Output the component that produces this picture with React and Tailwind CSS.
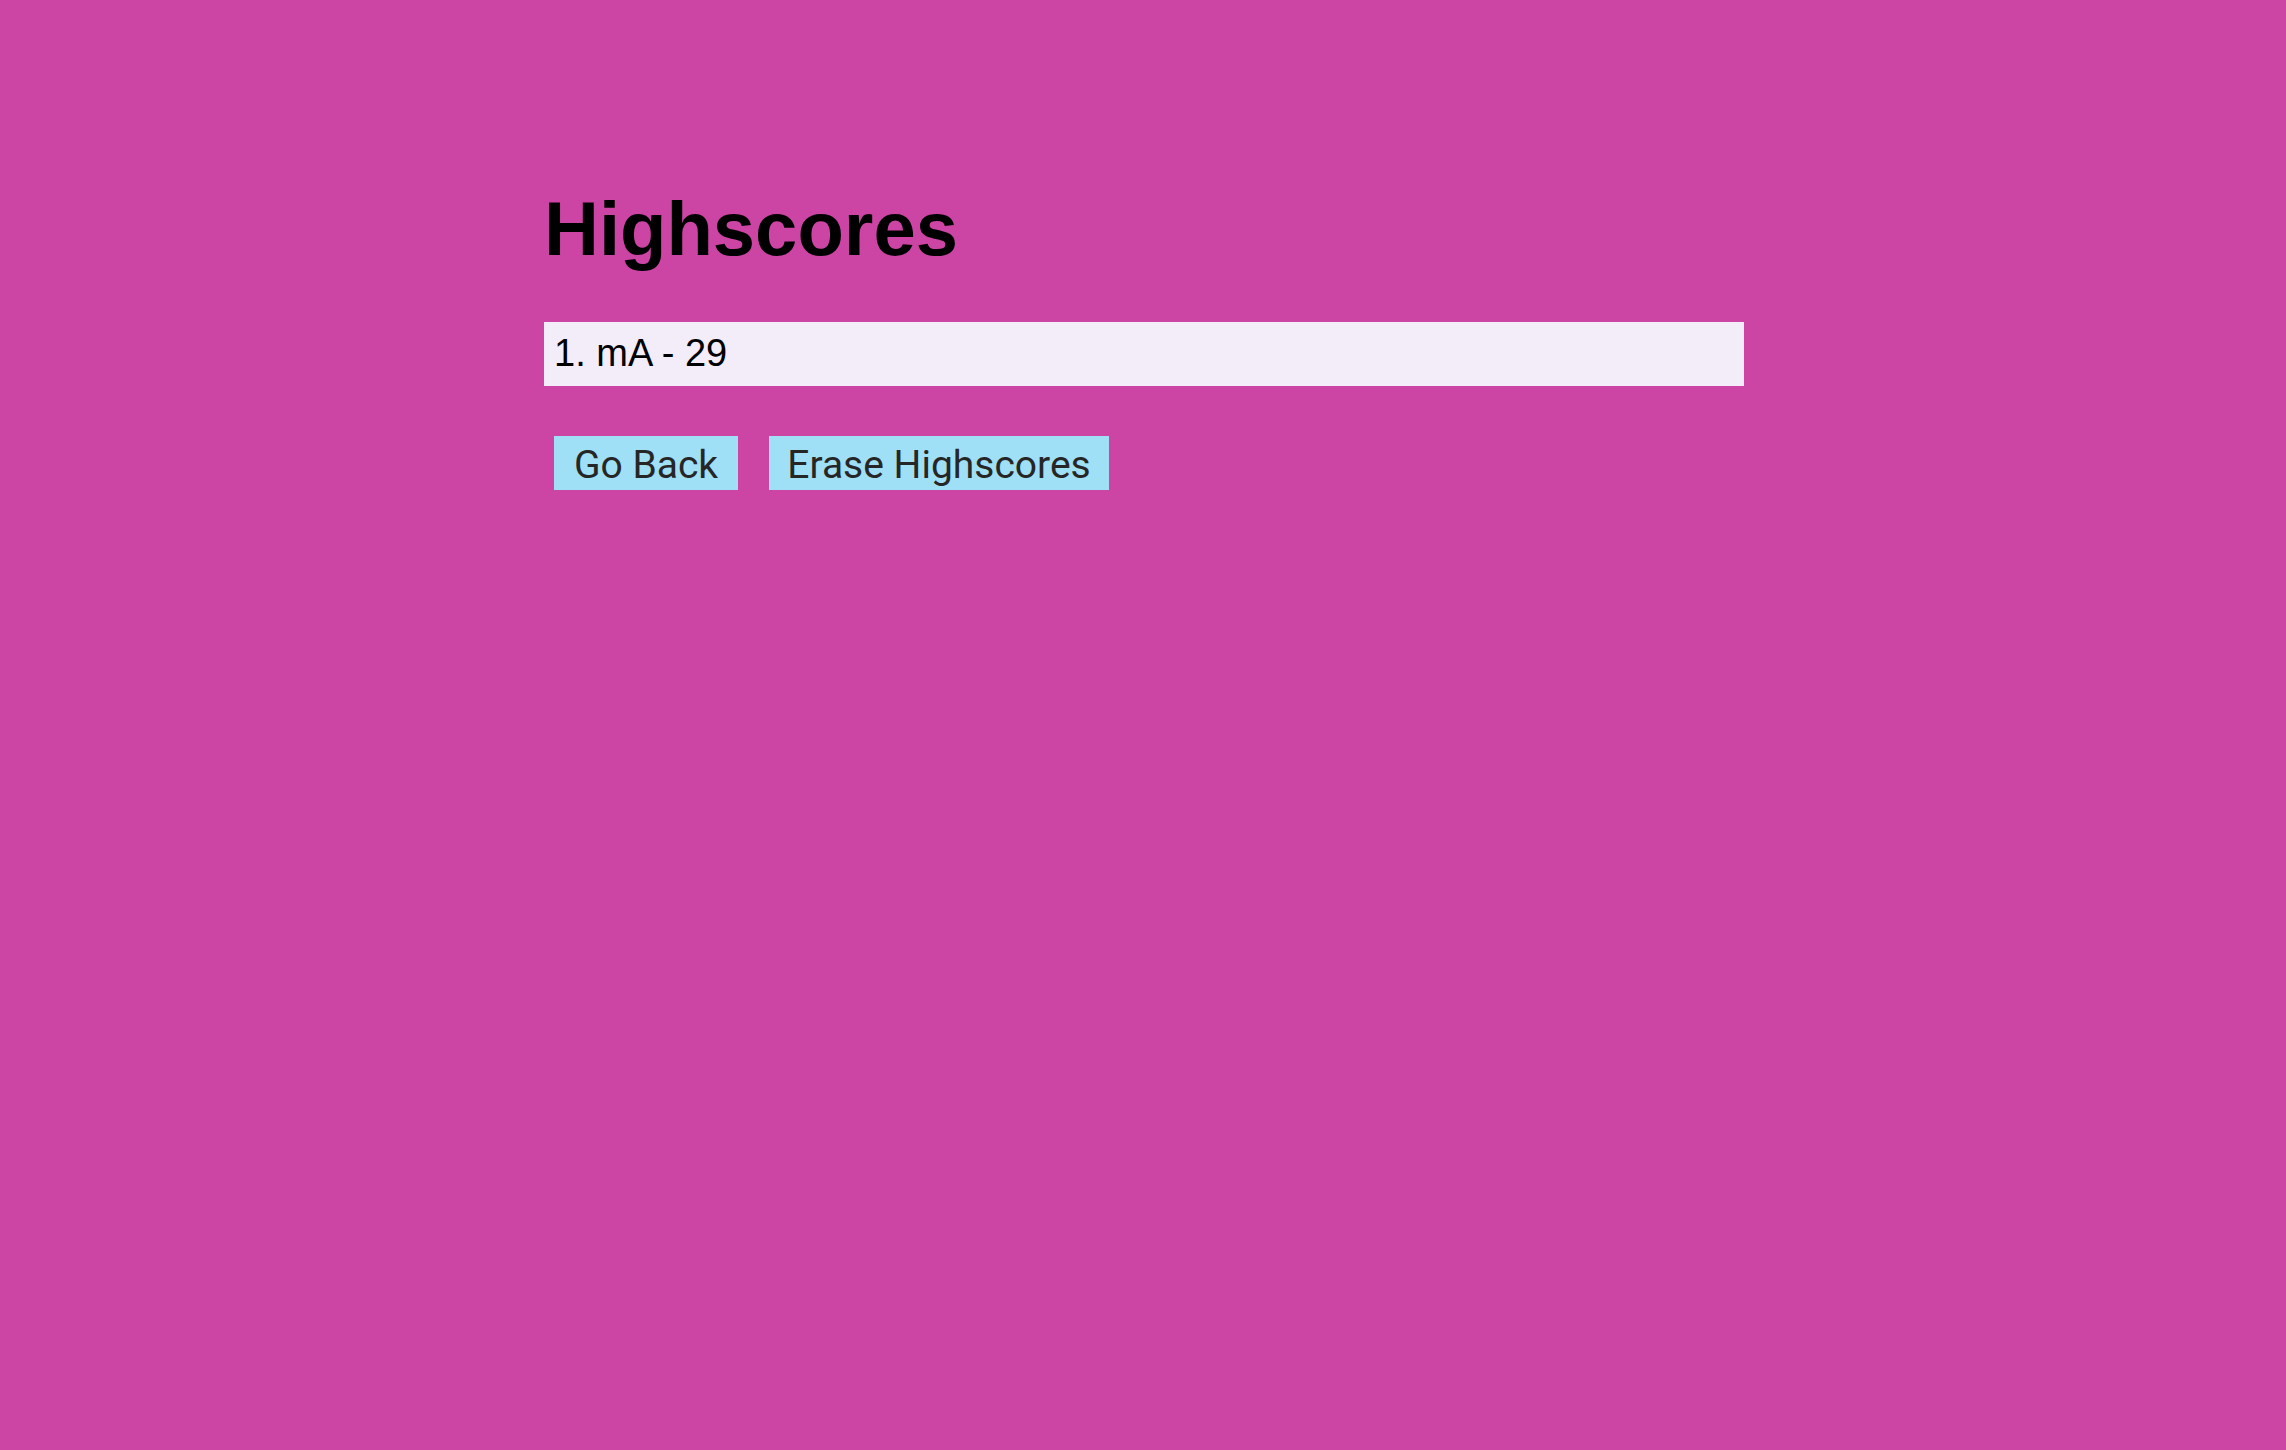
export default function App() {
  const scores = [{ initials: 'mA', score: 29 }]

  return (
    <div className="min-h-screen w-full bg-[#cc44a4]">
      <div className="ml-[544px] w-[1200px] pt-[191px]">
        <h1 className="font-['Liberation_Sans',Arial,sans-serif] text-[76px] font-bold leading-none text-black">
          Highscores
        </h1>

        <ul className="mt-[55px]">
          {scores.map((s, i) => (
            <li
              key={i}
              className="flex h-[64px] items-center bg-[#f2edf9] pb-[2px] pl-[10px] font-['Liberation_Sans',Arial,sans-serif] text-[38px] text-black"
            >
              {i + 1}. {s.initials} - {s.score}
            </li>
          ))}
        </ul>

        <div className="mt-[50px] flex gap-[31px] pl-[10px]">
          <button className="flex h-[54px] w-[184px] items-center justify-center bg-[#a0e0f6] pt-[4px] font-['Roboto',sans-serif] text-[39px] text-[#262626]">
            Go Back
          </button>
          <button className="flex h-[54px] w-[340px] items-center justify-center bg-[#a0e0f6] pt-[4px] font-['Roboto',sans-serif] text-[39px] text-[#262626]">
            Erase Highscores
          </button>
        </div>
      </div>
    </div>
  )
}
